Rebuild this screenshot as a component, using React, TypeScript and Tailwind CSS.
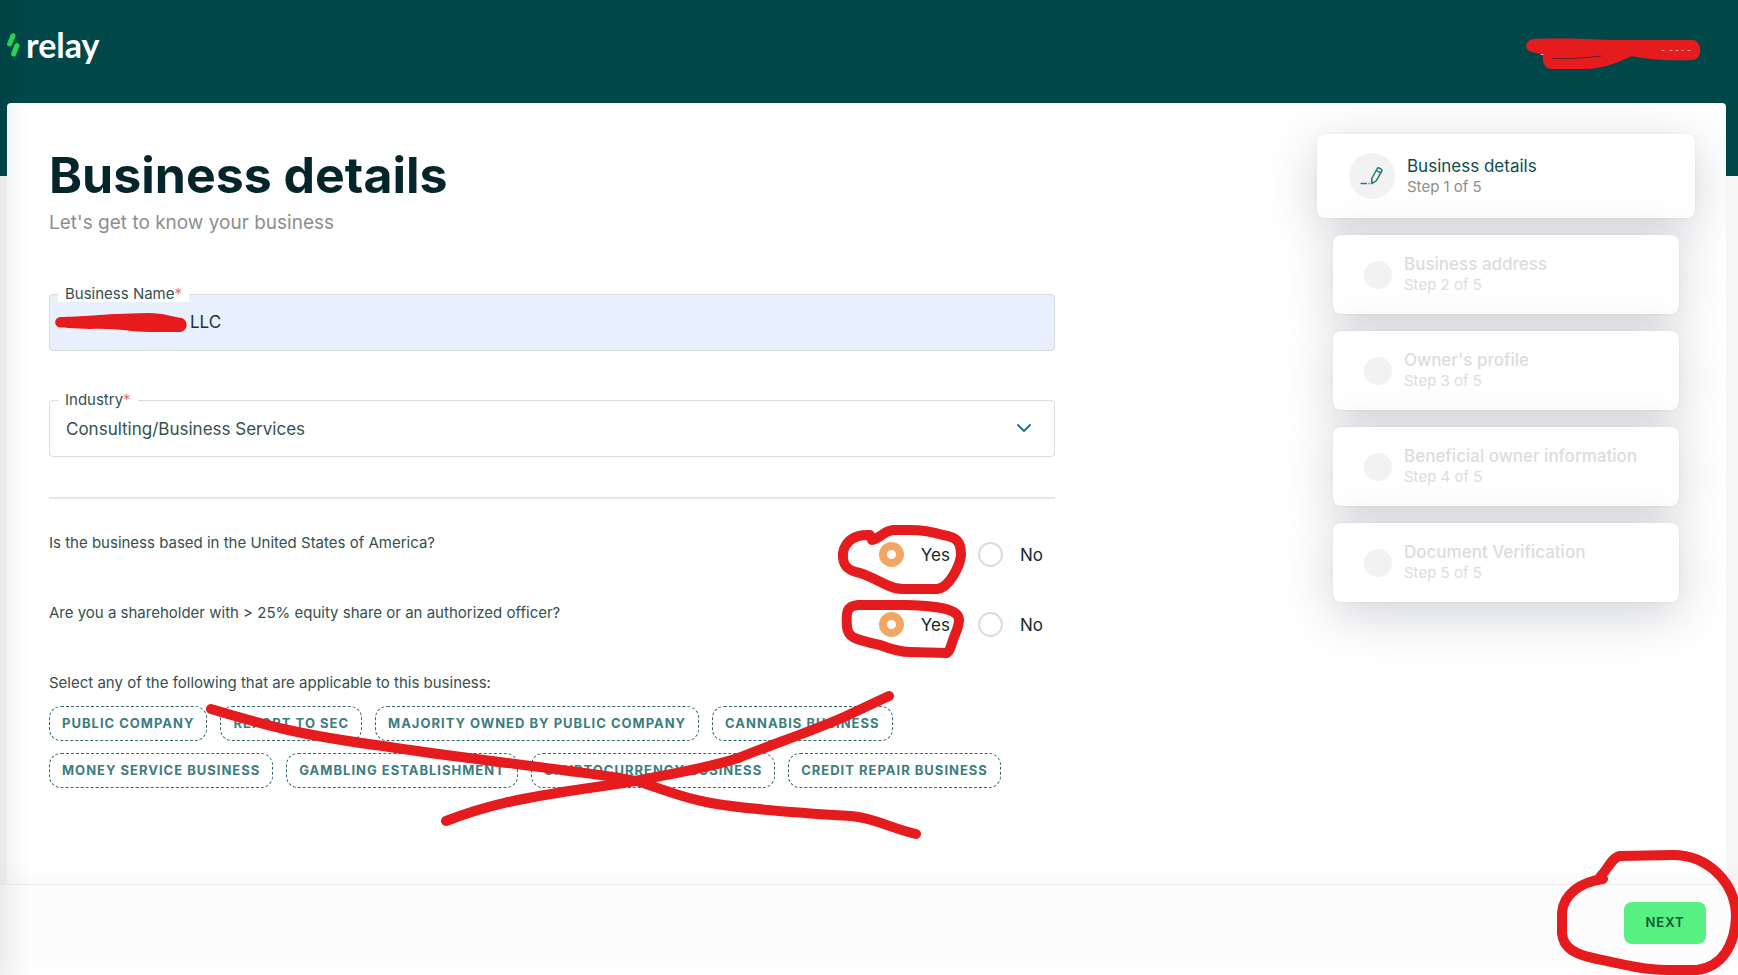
import { ChevronDown } from 'lucide-react';

const steps = ['Business address', "Owner's profile", 'Beneficial owner information', 'Document Verification'];

const questions = [
  { id: 'us', label: 'Is the business based in the United States of America?' },
  { id: 'officer', label: 'Are you a shareholder with > 25% equity share or an authorized officer?' },
];

const tags = [
  'Public company',
  'Report to SEC',
  'Majority owned by public company',
  'Cannabis business',
  'Money service business',
  'Gambling establishment',
  'Cryptocurrency business',
  'Credit repair business',
];

const Logo = () => (
  <a href="#" aria-label="relay" className="flex items-center gap-[6px] text-white">
    <svg width="13" height="24" viewBox="0 0 13 24" fill="none" stroke="#22dd55" strokeWidth="5" strokeLinecap="round">
      <path d="M6 2.800 2.600 11" />
      <path d="M10 12.500 6.600 21" />
    </svg>
    <span className="font-['Lato',sans-serif] text-[34px] leading-9 font-bold">relay</span>
  </a>
);

const Radio = ({ name, label, checked = false }: { name: string; label: string; checked?: boolean }) => (
  <label className="flex items-center gap-[17px] text-[17px] leading-6 text-[#112a30]">
    <input
      type="radio"
      name={name}
      defaultChecked={checked}
      className="size-[25px] appearance-none rounded-full border-2 border-[#dcdcdc] bg-white checked:border-8 checked:border-[#f2a663]"
    />
    {label}
  </label>
);

// red pen strokes drawn over the form
const Marks = () => (
  <svg
    aria-hidden="true"
    className="pointer-events-none absolute top-0 left-0"
    width="1738"
    height="975"
    viewBox="0 0 1738 975"
    fill="none"
    stroke="#e61b1d"
    strokeWidth="10"
    strokeLinecap="round"
    strokeLinejoin="round"
  >
    <path
      d="M1533 39C1560 38 1590 39 1610 40L1692 40C1703 40 1703 60 1692 60C1665 61 1645 59 1632 56C1615 64 1600 69 1586 69H1552C1544 69 1542 61 1543 54C1535 53 1526 52 1526 46C1527 42 1529 40 1533 39Z"
      fill="#e61b1d"
      strokeWidth="0"
    />
    <path d="M1553 58.500Q1580 59 1601 56" stroke="#5c2326" strokeWidth="1" />
    <path d="M1541 54.500H1543M1662 50.500H1664M1670 50.500H1683M1688 50.500H1690" stroke="#f3a9a4" strokeWidth="1" strokeDasharray="2 4" />
    <path
      d="M60 317C80 317 100 314 148 313C165 313 172 317 182 318C189 321 188 332 179 332H150C130 332 118 328 90 329L68 328C64 327 60 328 58 327C54 325 54 318 60 317Z"
      fill="#e61b1d"
      strokeWidth="0"
    />
    <path d="M870 535C855 534 845 541 843 553C842 566 848 571 860 573C870 576 880 582 887 585C893 588 898 589 903 589H937C949 588 960 566 961 555C961 542 957 537 943 535C930 531 922 530 910 530H893C884 531 880 538 872 540" />
    <path d="M858 605C846 606 846 613 847 627C848 637 853 639 880 645C893 650 900 652 910 652L947 653C951 650 951 645 953 640C955 633 959 628 959 620C959 608 935 606 907 605Z" />
    <path d="M211 709C268 726 300 735 383 746C440 755 510 763 569 771C600 775 620 777 640 782C665 790 680 797 706 802C740 809 800 813 851 816C875 818 890 828 916 834" />
    <path d="M446 821C490 804 520 799 569 791C600 786 620 784 640 780C665 775 710 768 741 757C770 745 810 732 844 717L889 696" />
    <path d="M1603 879C1580 882 1563 895 1562 913V933C1563 948 1575 954 1593 958C1625 965 1645 970 1667 970H1697C1722 967 1735 945 1736 917C1736 882 1707 855 1673 855L1620 856C1612 857 1608 869 1600 877" />
  </svg>
);

export default function App() {
  return (
    <div className="relative flex min-h-screen flex-col overflow-hidden bg-[#f6f6f6] font-['Inter',sans-serif] text-[#35504f]">
      <div className="flex grow flex-col bg-linear-to-b from-[#00474a] from-[176px] to-transparent to-[176px] pr-3 pl-[7px]">
        <header className="flex h-[103px] items-start pt-[27px]">
          <Logo />
        </header>
        <main className="flex grow justify-between overflow-hidden rounded-t bg-white pr-[31px] pl-[42px]">
          <form className="w-[1006px] pt-[42px]">
            <h1 className="text-[50px] leading-[60px] font-bold text-[#04262a]">Business details</h1>
            <p className="mt-1 text-[19px] leading-7 text-[#8e8e8e]">Let's get to know your business</p>

            <fieldset className="mt-[49px] rounded border border-[#dcdcdc] bg-[#e8effd] pl-2">
              <legend className="bg-white px-[7px] text-[15px] leading-4">
                <label htmlFor="name">
                  Business Name<span className="text-[#e8746c]">*</span>
                </label>
              </legend>
              <input
                id="name"
                defaultValue="LLC"
                className="block h-12 w-full bg-transparent pb-2 pl-[132px] text-[17px] text-[#20303a]"
              />
            </fieldset>

            <fieldset className="relative mt-[41px] rounded border border-[#dcdcdc] pl-2">
              <legend className="px-[7px] text-[15px] leading-4">
                <label htmlFor="industry">
                  Industry<span className="text-[#e8746c]">*</span>
                </label>
              </legend>
              <select id="industry" className="block h-12 w-full appearance-none bg-transparent pb-1 pl-2 text-[17px]">
                <option>Consulting/Business Services</option>
              </select>
              <ChevronDown className="pointer-events-none absolute top-2 right-[18px] size-6 text-[#1f7a78]" />
            </fieldset>

            <hr className="mt-10 border-t-2 border-[#e6e6e6]" />

            <div className="mt-[34px] space-y-9">
              {questions.map((q) => (
                <div key={q.id} role="radiogroup" aria-label={q.label} className="flex justify-between pr-3">
                  <p className="text-[15px] leading-5">{q.label}</p>
                  <div className="mt-[9px] flex gap-7">
                    <Radio name={q.id} label="Yes" checked />
                    <Radio name={q.id} label="No" />
                  </div>
                </div>
              ))}
            </div>

            <p className="mt-9 text-[15px] leading-5">Select any of the following that are applicable to this business:</p>
            <div className="mt-[13px] flex flex-wrap gap-x-[13px] gap-y-3">
              {tags.map((tag) => (
                <button
                  key={tag}
                  type="button"
                  className="h-[35px] rounded-xl border border-dashed border-[#35696b] px-3 text-[13px] font-bold tracking-[1px] text-[#3b7d80] uppercase"
                >
                  {tag}
                </button>
              ))}
            </div>
          </form>

          <ol className="flex w-[378px] flex-col gap-[17px] pt-[31px]">
            <li className="flex h-[84px] items-center rounded-lg bg-white pl-8 shadow-[0_12px_50px_rgba(40,50,70,0.22),0_0_3px_rgba(0,0,0,0.06)]">
              <span className="flex size-[46px] items-center justify-center rounded-full bg-[#f2f2f2]">
                <svg width="24" height="20" viewBox="0 0 24 20" fill="none" stroke="#1f7a78" strokeWidth="1.500" strokeLinejoin="round">
                  <path d="M.5 17.500H7M8.500 17.500H9.500" />
                  <path d="M11.600 17.600 11.800 12.500 17.300 2.500Q17.900 1.500 18.900 2L21.400 3.400Q22.400 4 21.800 5L16.200 14.800ZM16.400 4.400 20.600 6.900" />
                </svg>
              </span>
              <div className="ml-3">
                <p className="text-[17px] leading-[21px] text-[#0f4c4a]">Business details</p>
                <p className="text-[15px] leading-5 text-[#8e8e8e]">Step 1 of 5</p>
              </div>
            </li>
            {steps.map((step, i) => (
              <li
                key={step}
                className="mx-4 flex h-[79px] items-center rounded-lg bg-white pl-[31px] shadow-[0_12px_50px_rgba(40,50,70,0.22),0_0_3px_rgba(0,0,0,0.06)]"
              >
                <span className="size-7 rounded-full bg-[#f2f2f2]" />
                <div className="ml-3 text-[#dcdcde]">
                  <p className="text-[17px] leading-[21px] font-medium">{step}</p>
                  <p className="text-[15px] leading-5">Step {i + 2} of 5</p>
                </div>
              </li>
            ))}
          </ol>
        </main>
      </div>

      <div className="relative bg-[#fefefe] pb-[14px]">
        <footer className="flex h-[77px] items-start justify-end border-t border-[#efefef] bg-[#fcfcfc] pt-[17px] pr-8 shadow-[0_-6px_20px_rgba(0,0,0,0.03)]">
          <button type="button" className="h-[42px] w-[82px] rounded-lg bg-[#56f083] text-[13px] font-semibold tracking-[1px] text-[#0a5a35]">
            NEXT
          </button>
        </footer>
      </div>
      <div className="pointer-events-none absolute inset-y-0 left-0 w-7 bg-linear-to-r from-black/6 to-transparent" />
      <Marks />
    </div>
  );
}
